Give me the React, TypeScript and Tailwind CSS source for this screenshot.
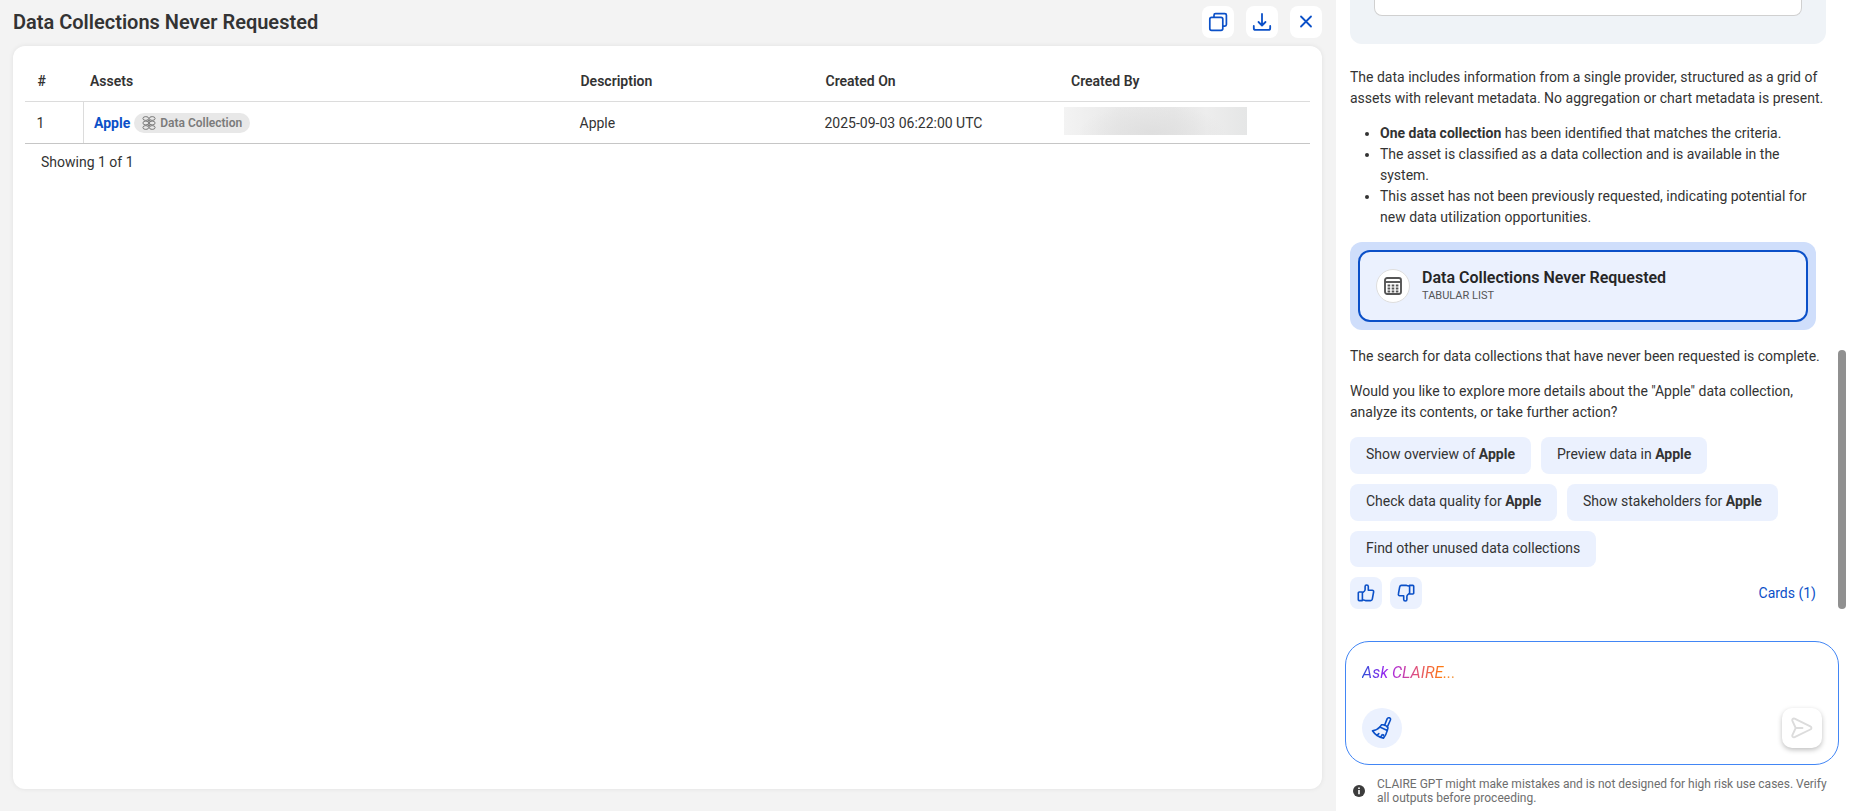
import type { ReactNode } from "react";

const columns = ["#", "Assets", "Description", "Created On", "Created By"];
const headPads = ["pl-[12.5px]", "pl-[7px]", "pl-[9.5px]", "pl-[9.5px]", "pl-[9px]"];

const suggestions = [
  { text: "Show overview of ", strong: "Apple", size: "w-[181px] h-[37px]" },
  { text: "Preview data in ", strong: "Apple", size: "w-[166px] h-[37px]" },
  { text: "Check data quality for ", strong: "Apple", size: "w-[207px] h-[37px]" },
  { text: "Show stakeholders for ", strong: "Apple", size: "w-[211px] h-[37px]" },
  { text: "Find other unused data collections", strong: "", size: "w-[246px] h-[36px]" },
];

function ToolButton({ label, children }: { label: string; children: ReactNode }) {
  return (
    <button aria-label={label} className="flex size-8 items-center justify-center rounded-lg bg-white text-[#0b50c8]">
      {children}
    </button>
  );
}

function CopyIcon() {
  return (
    <svg width="20" height="20" viewBox="0 0 20 20" fill="none" stroke="currentColor" strokeWidth="1.7">
      <rect x="1.8" y="5.3" width="13" height="13" rx="1.8" />
      <path d="M6 5.2V3.2C6 2.3 6.6 1.7 7.5 1.7h9.3c.9 0 1.6.7 1.6 1.6v9.3c0 .9-.7 1.5-1.6 1.5h-2" />
    </svg>
  );
}

function DownloadIcon() {
  return (
    <svg width="20" height="20" viewBox="0 0 20 20" fill="none" stroke="currentColor" strokeWidth="1.8" strokeLinecap="round" strokeLinejoin="round">
      <path d="M10 2v11M6.5 10l3.5 3.5 3.5-3.5M1.8 14v2.2c0 1 .7 1.7 1.7 1.7h13c1 0 1.7-.7 1.7-1.7V14" />
    </svg>
  );
}

function CloseIcon() {
  return (
    <svg width="20" height="20" viewBox="0 0 20 20" fill="none" stroke="currentColor" strokeWidth="1.8" strokeLinecap="round">
      <path d="M5 4.5l10 10M15 4.5l-10 10" />
    </svg>
  );
}

function CollectionIcon() {
  const rows = [2.5, 7, 11.5];
  return (
    <svg width="14" height="14" viewBox="0 0 14 14" fill="none" stroke="#7b7b7b" strokeWidth="1">
      {rows.map((y) => (
        <g key={y}>
          <ellipse cx="3.8" cy={y} rx="2.9" ry="1.9" />
          <ellipse cx="10.2" cy={y} rx="2.9" ry="1.9" />
        </g>
      ))}
      <path d="M5.8 3.9l2.400 1.700M8.200 3.900L5.800 5.600M5.800 8.400l2.400 1.700M8.200 8.400l-2.400 1.700" />
    </svg>
  );
}

function TableIcon() {
  return (
    <svg width="18" height="18" viewBox="0 0 18 18" fill="none" stroke="#555" strokeWidth="1.9">
      <rect x="1" y="1" width="16" height="16" rx="2.2" />
      <path d="M1 5h16" />
      <path d="M3.600 8.500h2.600M7.700 8.500h2.600M11.800 8.500h2.600M3.600 11.500h2.600M7.700 11.500h2.600M11.800 11.500h2.600M3.600 14.400h2.600M7.700 14.400h2.600M11.800 14.400h2.600" strokeWidth="2" />
    </svg>
  );
}

function ThumbIcon({ down = false }: { down?: boolean }) {
  return (
    <svg
      width="18"
      height="18"
      viewBox="0 0 18 18"
      fill="none"
      stroke="currentColor"
      strokeWidth="1.6"
      strokeLinejoin="round"
      className={down ? "rotate-180" : ""}
    >
      <path d="M2.200 8h3.200v8.600H2.200c-.5 0-.9-.4-.9-.9V8.900c0-.5.4-.9.900-.9zM5.400 9l2.100-2c.4-.4.600-.8.600-1.400V2.500c0-.9.600-1.500 1.500-1.500 1 0 1.700.6 1.700 1.600v3.700h4c.9 0 1.500.8 1.300 1.700l-1.300 7.100c-.2.900-.8 1.500-1.700 1.500H8.400l-3-.8z" />
    </svg>
  );
}

function BroomIcon() {
  return (
    <svg width="22" height="24" viewBox="0 0 22 24" fill="none" stroke="#0b50c8" strokeWidth="1.6" strokeLinecap="round" strokeLinejoin="round">
      <path d="M13.6 9.3l2.500-6.400c.4-1 1.200-1.400 2.200-1.100 1.100.4 1.500 1.200 1.100 2.200l-2.900 6.600" />
      <path d="M10.4 8.900c2.300-.5 5.300.8 6.600 3l-.7 2.500-7.500-3.300z" />
      <path d="M8.800 11.100c-1.600 2.100-4 3.200-7.300 3.700 2.300 3.600 6 6.500 11 7.300 2-2 3.100-5 3.800-7.700" />
      <path d="M6 19.300l1.800-1.700M9.600 21.200l1.600-2.600M12.600 18.800l-.1 1" />
    </svg>
  );
}

function SendIcon() {
  return (
    <svg width="22" height="22" viewBox="0 0 22 22" fill="none" stroke="#dcdcdc" strokeWidth="1.9" strokeLinecap="round" strokeLinejoin="round">
      <path d="M3.6 1.7l15.700 7.600c1.500.7 1.500 2.500 0 3.200L3.600 20.200c-1.500.6-2.700-.6-2.200-2.100l3.300-7.100L1.400 3.800c-.5-1.500.7-2.700 2.200-2.100zM4.700 11h6.800" />
    </svg>
  );
}

function ResultsPanel() {
  return (
    <section className="flex w-[1336px] shrink-0 flex-col bg-[#f3f3f3] pb-[22px] pl-[13px] pr-[14px]">
      <header className="flex h-[46px] items-start justify-between pt-[6px]">
        <h1 className="text-xl font-semibold leading-8 text-[#333]">Data Collections Never Requested</h1>
        <div className="flex gap-3">
          <ToolButton label="Copy"><CopyIcon /></ToolButton>
          <ToolButton label="Download"><DownloadIcon /></ToolButton>
          <ToolButton label="Close"><CloseIcon /></ToolButton>
        </div>
      </header>
      <div className="flex-1 rounded-xl bg-white px-3 pt-[15px] text-sm text-[#333] shadow-[0_0_5px_rgba(0,0,0,0.08)]">
        <div className="grid h-[41px] grid-cols-[58px_488px_245px_246px_1fr] items-center border-b border-[#dcdcdc] font-semibold">
          {columns.map((c, i) => (
            <div key={c} className={headPads[i]}>{c}</div>
          ))}
        </div>
        <div className="grid h-[42px] grid-cols-[59px_487px_245px_239px_1fr] items-center border-b border-[#c6c6c6]">
          <div className="flex h-full items-center border-r border-[#dcdcdc] pl-[11.5px]">1</div>
          <div className="flex items-center pl-[10px]">
            <a className="font-bold text-[#0b50c8]">Apple</a>
            <span className="ml-1 flex h-5 w-[116px] items-center gap-[4px] rounded-[10px] bg-[#e8e8e8] pl-2 text-xs font-semibold text-[#7b7b7b]">
              <CollectionIcon />
              Data Collection
            </span>
          </div>
          <div className="pl-[8.5px]">Apple</div>
          <div className="pl-[8.5px]">2025-09-03 06:22:00 UTC</div>
          <div className="pb-[3px] pl-[9px]">
            <div className="h-7 w-[183px] bg-[radial-gradient(ellipse_40%_100%_at_48%_90%,#dfdfdf,transparent),linear-gradient(90deg,#f3f3f3,#e9e9e9_30%,#e7e7e7_60%,#ededed_78%,#e5e6e6)]" />
          </div>
        </div>
        <p className="pl-4 pt-[8px] leading-5">Showing 1 of 1</p>
      </div>
    </section>
  );
}

function Conversation() {
  return (
    <div className="h-[641px] w-[494px] pl-[5px] text-sm leading-[21px] text-[#333]">
      <div className="h-11 w-[476px] rounded-b-xl bg-[#eff3f7] px-6">
        <div className="h-4 rounded-b-lg border border-t-0 border-[#d0d0d0] bg-white" />
      </div>
      <p className="whitespace-nowrap pt-[23px]">
        The data includes information from a single provider, structured as a grid of
        <br />
        assets with relevant metadata. No aggregation or chart metadata is present.
      </p>
      <ul className="mt-[14px] list-disc whitespace-nowrap pl-[30px]">
        <li><b>One data collection</b> has been identified that matches the criteria.</li>
        <li>The asset is classified as a data collection and is available in the<br />system.</li>
        <li>This asset has not been previously requested, indicating potential for<br />new data utilization opportunities.</li>
      </ul>
      <div className="mt-[14px] h-[88px] w-[466px] rounded-xl bg-[#cfdefb] p-2">
        <div className="flex h-[72px] rounded-xl border-2 border-[#0b50c8] bg-[#ebf1fe] pl-4">
          <div className="mt-[17px] flex size-[34px] shrink-0 items-center justify-center rounded-full border border-[#dedede] bg-white">
            <TableIcon />
          </div>
          <div className="pl-3 pt-4">
            <h2 className="text-base font-semibold leading-5 text-[#262626]">Data Collections Never Requested</h2>
            <p className="text-[11px] leading-[15px] text-[#555]">TABULAR LIST</p>
          </div>
        </div>
      </div>
      <p className="mt-4 whitespace-nowrap">The search for data collections that have never been requested is complete.</p>
      <p className="mt-[14px] whitespace-nowrap">
        Would you like to explore more details about the "Apple" data collection,
        <br />
        analyze its contents, or take further action?
      </p>
      <div className="mt-[14px] flex w-[466px] flex-wrap gap-[10px]">
        {suggestions.map((s) => (
          <button key={s.text} className={`${s.size} whitespace-nowrap rounded-lg bg-[#ebf1fe] pb-[2px] pl-4 text-left`}>
            {s.text}
            <b>{s.strong}</b>
          </button>
        ))}
      </div>
      <div className="mt-[10px] flex w-[466px] items-center gap-2 text-[#0b50c8]">
        <button aria-label="Helpful" className="flex size-8 items-center justify-center rounded-lg bg-[#ebf1fe]"><ThumbIcon /></button>
        <button aria-label="Not helpful" className="flex size-8 items-center justify-center rounded-lg bg-[#ebf1fe]"><ThumbIcon down /></button>
        <a className="ml-auto">Cards (1)</a>
      </div>
    </div>
  );
}

function Composer() {
  return (
    <div className="flex h-[124px] w-[494px] flex-col justify-between rounded-3xl border border-[#4286f5] px-4 pb-4 pt-[21px]">
      <span className="w-fit bg-[linear-gradient(90deg,#2c50d8,#a020f0_27%,#e0507a_58%,#ff7a10_85%,#f0a050)] bg-clip-text text-base italic leading-5 text-transparent">
        Ask CLAIRE...
      </span>
      <div className="flex items-center justify-between">
        <button aria-label="Clear" className="flex size-10 items-center justify-center rounded-full bg-[#ebf1fe]"><BroomIcon /></button>
        <button aria-label="Send" className="flex size-10 items-center justify-center rounded-[10px] bg-white shadow-[0_2px_5px_rgba(0,0,0,0.25)]"><SendIcon /></button>
      </div>
    </div>
  );
}

function ChatPanel() {
  return (
    <section className="flex flex-1 bg-white pl-[9px]">
      <div className="w-[494px] shrink-0">
        <Conversation />
        <Composer />
        <footer className="flex items-center pl-2 pt-3">
          <svg width="12" height="12" viewBox="0 0 12 12" className="shrink-0">
            <circle cx="6" cy="6" r="6" fill="#3c3c3c" />
            <path d="M5.2 2.5h1.600v1.500H5.200zM5.200 5h1.600v4.300H5.200z" fill="#fff" />
          </svg>
          <p className="whitespace-nowrap pl-3 text-xs leading-[14px] text-[#6e6e6e]">
            CLAIRE GPT might make mistakes and is not designed for high risk use cases. Verify
            <br />
            all outputs before proceeding.
          </p>
        </footer>
      </div>
      <div className="-ml-px mt-[350px] h-[259px] w-2 rounded-full bg-[#909090]" />
    </section>
  );
}

export default function App() {
  return (
    <main className="flex h-[811px] w-[1856px] overflow-hidden bg-white font-['Roboto',sans-serif]">
      <ResultsPanel />
      <ChatPanel />
    </main>
  );
}
